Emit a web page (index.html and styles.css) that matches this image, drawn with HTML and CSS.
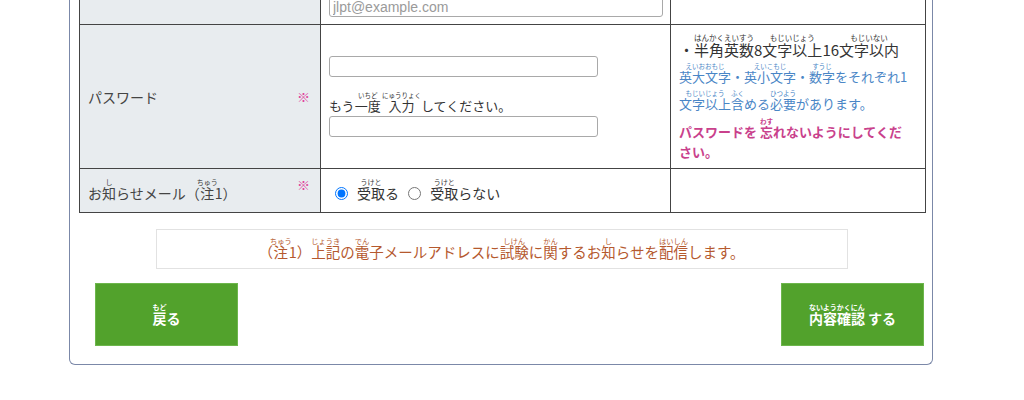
FILE: index.html
```html
<!DOCTYPE html>
<html lang="ja">
<head>
<meta charset="UTF-8">
<title>受験者登録</title>
<link rel="stylesheet" href="styles.css">
</head>
<body>

<div class="form-box">
  <table class="form-table">
    <colgroup><col class="col-label"><col class="col-input"><col class="col-help"></colgroup>
    <tr class="row-email">
      <th></th>
      <td><input type="text" class="input-full" placeholder="jlpt@example.com"></td>
      <td></td>
    </tr>
    <tr>
      <th><span class="req">※</span>パスワード</th>
      <td>
        <input type="password" class="input-pass">
        <div class="again">もう<ruby>一度<rt>いちど</rt></ruby> <ruby>入力<rt>にゅうりょく</rt></ruby> してください。</div>
        <input type="password" class="input-pass">
      </td>
      <td class="help">
        <div class="help-black">・<ruby>半角英数<rt>はんかくえいすう</rt></ruby>8<ruby>文字以上<rt>もじいじょう</rt></ruby>16<ruby>文字以内<rt>もじいない</rt></ruby></div>
        <div class="help-blue"><ruby>英大文字<rt>えいおおもじ</rt></ruby>・<ruby>英小文字<rt>えいこもじ</rt></ruby>・<ruby>数字<rt>すうじ</rt></ruby>をそれぞれ1<ruby>文字以上<rt>もじいじょう</rt></ruby><ruby>含<rt>ふく</rt></ruby>める<ruby>必要<rt>ひつよう</rt></ruby>があります。</div>
        <div class="help-pink">パスワードを <ruby>忘<rt>わす</rt></ruby>れないようにしてください。</div>
      </td>
    </tr>
    <tr class="row-mail">
      <th><span class="req req-high">※</span>お<ruby>知<rt>し</rt></ruby>らせメール（<ruby>注<rt>ちゅう</rt></ruby>1）</th>
      <td>
        <label class="radio"><input type="radio" name="mail" checked><ruby>受取<rt>うけと</rt></ruby>る</label>
        <label class="radio"><input type="radio" name="mail"><ruby>受取<rt>うけと</rt></ruby>らない</label>
      </td>
      <td></td>
    </tr>
  </table>

  <p class="note">（<ruby>注<rt>ちゅう</rt></ruby>1）<ruby>上記<rt>じょうき</rt></ruby>の<ruby>電<rt>でん</rt></ruby>子メールアドレスに<ruby>試験<rt>しけん</rt></ruby>に<ruby>関<rt>かん</rt></ruby>するお<ruby>知<rt>し</rt></ruby>らせを<ruby>配信<rt>はいしん</rt></ruby>します。</p>

  <div class="buttons">
    <button class="btn"><ruby>戻<rt>もど</rt></ruby>る</button>
    <button class="btn"><ruby>内容確認<rt>ないようかくにん</rt></ruby> する</button>
  </div>
</div>

</body>
</html>
```

FILE: styles.css
```css
body { margin: 0; font-family: "Noto Sans CJK JP", sans-serif; color: #333; background: #fff; }

.form-box {
  width: 864px;
  box-sizing: border-box;
  margin: -12px 0 0 69px;
  padding: 0 8px 18px 9px;
  border: 1px solid #7b88a8;
  border-top: none;
  border-radius: 0 0 6px 6px;
}

.form-table { border-collapse: collapse; table-layout: fixed; width: 846px; font-size: 14px; line-height: 20px; }
.col-label { width: 241px; }
.col-input { width: 350px; }
.col-help { width: 255px; }
.form-table th, .form-table td { border: 1px solid #444; padding: 7px 8px; vertical-align: middle; text-align: left; }
.form-table th { background: #e8ecef; font-weight: normal; color: #444; padding-right: 10px; }
.req { float: right; color: #e0439c; font-size: 13px; }
.req-high { margin-top: -8px; }

rt { font-size: 50%; }
ruby { ruby-align: center; }

input[type="text"], input[type="password"] {
  height: 21px;
  box-sizing: border-box;
  border: 1px solid #a9a9a9;
  border-radius: 3px;
  font-family: "Liberation Sans", sans-serif;
  font-size: 14px;
  padding: 0 3px;
  display: block;
}
input::placeholder { color: #9a9a9a; }
.input-full { width: 334px; }
.input-pass { width: 269px; }
.again { margin-top: 15px; font-size: 13px; color: #333; }

.form-table .help { padding: 9px 14px 6px 8px; vertical-align: top; }
.help-black { font-size: 15px; line-height: 27px; }
.help-blue { font-size: 13px; line-height: 27px; color: #4a86c6; }
.help-pink { font-size: 13px; margin-top: 1px; color: #c9418c; font-weight: bold; }

.row-mail th, .row-mail td { padding-top: 14px; padding-bottom: 9px; }
.radio input { margin: 0 9px 0 6px; vertical-align: -1px; }

.note {
  width: 692px;
  box-sizing: border-box;
  margin: 16px auto 0;
  padding: 12px 0 6px;
  border: 1px solid #e2e2e2;
  text-align: center;
  color: #b5592e;
  font-size: 14.5px;
  line-height: 20px;
}

.buttons { display: flex; justify-content: space-between; margin-top: 14px; padding-left: 16px; }
.btn {
  width: 143px;
  height: 63px;
  background: #52a22c;
  border: 1px solid #6db64c;
  color: #fff;
  font-family: "Noto Sans CJK JP", sans-serif;
  font-size: 14px;
  font-weight: bold;
  line-height: 20px;
  padding-top: 8px;
}
.btn rt { font-weight: bold; }
```
